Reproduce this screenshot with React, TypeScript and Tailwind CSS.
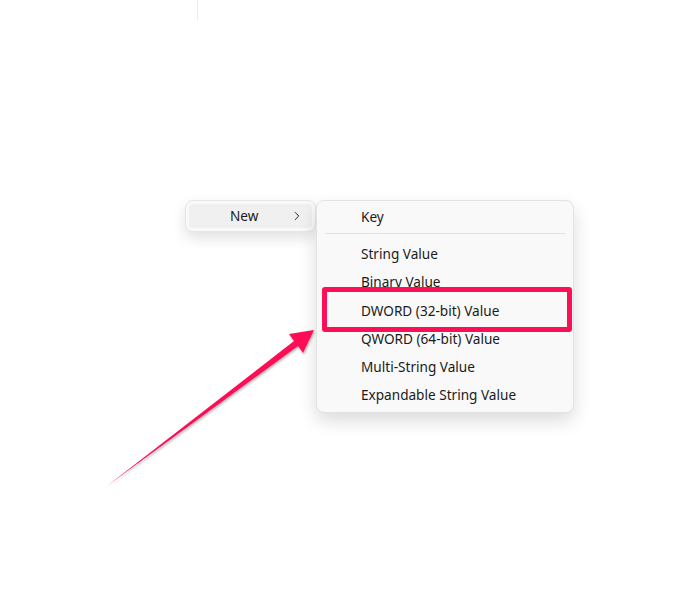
import React from 'react';
import { ChevronRight } from 'lucide-react';

const items = ['String Value', 'Binary Value', 'DWORD (32-bit) Value', 'QWORD (64-bit) Value', 'Multi-String Value', 'Expandable String Value'];

export default function App() {
  return (
    <div className="relative w-[681px] h-[600px] bg-white overflow-hidden text-[#1b1b1b] text-[13.6px]" style={{ fontFamily: '"Noto Sans", "Open Sans", sans-serif' }}>
      <div className="ml-[197px] w-px h-5 bg-[#ebebeb]" />

      {/* context menus */}
      <div className="flex items-start ml-[185px] mt-[180px]">
        <div className="w-[131px] h-[32px] p-[3px] bg-[#f9f9f9] border border-[#e6e6e6] rounded-lg shadow-[0_6px_14px_rgba(0,0,0,0.12)]">
          <div className="flex items-center h-full rounded bg-[#f0f0f0] pl-[41px] pr-[8px]">
            <span className="flex-1">New</span>
            <ChevronRight className="w-[14px] h-[14px] text-[#222]" strokeWidth={1.7} />
          </div>
        </div>
        <div className="w-[258px] pt-[2px] pb-[2px] bg-[#f9f9f9] border border-[#e3e3e3] rounded-lg shadow-[0_8px_18px_rgba(0,0,0,0.14)]">
          <div className="h-7 flex items-center pl-[44px]">Key</div>
          <div className="mx-2 mt-[2px] mb-[6px] h-px bg-[#e2e2e2]" />
          {items.map((label) => (
            <div key={label} className="h-[28.3px] flex items-center pl-[44px]">{label}</div>
          ))}
        </div>
      </div>

      {/* annotation */}
      <div className="absolute left-[322px] top-[287px] w-[250px] h-[45px] border-[5px] border-[#fd0f57] rounded-[3px]" />
      <svg className="absolute inset-0 pointer-events-none" width="681" height="600" viewBox="0 0 681 600">
        <defs>
          <filter id="sh" x="-10%" y="-10%" width="120%" height="120%">
            <feDropShadow dx="1" dy="1.5" stdDeviation="1" floodColor="#000" floodOpacity="0.3" />
          </filter>
        </defs>
        <polygon points="107,486 294,341 289,334 314,330 303,353 298,346" fill="#fd0f57" filter="url(#sh)" />
      </svg>
    </div>
  );
}
